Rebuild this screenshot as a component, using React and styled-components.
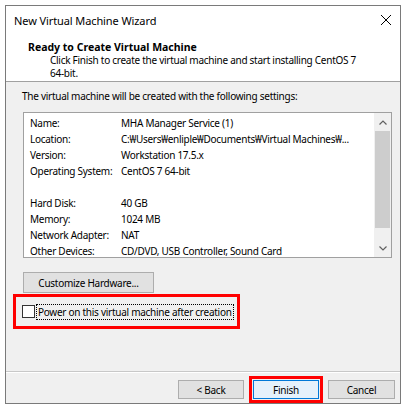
import React from "react";
import styled, { createGlobalStyle } from "styled-components";

const GlobalStyle = createGlobalStyle`
  html, body {
    margin: 0;
    padding: 0;
    background: #ffffff;
  }
  body {
    font-family: "Noto Sans", "Liberation Sans", sans-serif;
    font-size: 10px;
    letter-spacing: -0.27px;
    color: #000000;
  }
`;

// Wizard window frame
const Window = styled.div`
  box-sizing: border-box;
  width: 396px;
  height: 399px;
  margin: 5px 0 0 5px;
  border: 1px solid #7a7a7a;
  display: flex;
  flex-direction: column;
  background: #ffffff;
`;

const TitleBar = styled.div`
  height: 28px;
  display: flex;
  align-items: center;
  justify-content: space-between;
  padding: 0 8px 0 8px;
  font-size: 11px;
  letter-spacing: -0.1px;
  color: #000;
`;

const CloseIcon = styled.svg`
  width: 12px;
  height: 12px;
`;

// White header with page title
const Header = styled.div`
  padding: 6px 0 1px 22px;
  border-bottom: 1px solid #a0a0a0;
`;

const HeaderTitle = styled.div`
  font-weight: bold;
  line-height: 14px;
  font-size: 10.5px;
  letter-spacing: 0;
`;

const HeaderText = styled.div`
  padding-left: 22px;
  padding-right: 30px;
  line-height: 13px;
`;

// Grey content area
const Body = styled.div`
  flex: 1;
  background: #f0f0f0;
  padding: 7px 7px 0 17px;
  display: flex;
  flex-direction: column;
  align-items: flex-start;
`;

const Intro = styled.div`
  line-height: 14px;
  margin-left: -1px;
`;

const ListBox = styled.div`
  box-sizing: border-box;
  margin-top: 9px;
  width: 369px;
  height: 146px;
  border: 1px solid #a0a0a0;
  background: #ffffff;
  display: flex;
`;

const Rows = styled.div`
  flex: 1;
  padding: 2px 0 0 6px;
`;

const Row = styled.div`
  display: flex;
  height: 16px;
  align-items: center;
  white-space: nowrap;
`;

const Label = styled.span`
  width: 91px;
  flex: none;
`;

const Value = styled.span``;

const ScrollBar = styled.div`
  width: 17px;
  background: #f0f0f0;
  display: flex;
  flex-direction: column;
  align-items: center;
`;

const ScrollArrow = styled.div`
  height: 18px;
  display: flex;
  align-items: center;
  justify-content: center;
`;

const Thumb = styled.div`
  width: 15px;
  height: 97px;
  background: #cdcdcd;
`;

const Spacer = styled.div`
  flex: 1;
`;

const Button = styled.button`
  box-sizing: border-box;
  font-family: inherit;
  font-size: 10px;
  letter-spacing: -0.27px;
  color: #000;
  padding: 0;
  height: ${({ tall }) => (tall ? "21px" : "19px")};
  width: ${({ w }) => w || 66}px;
  background: ${({ primary }) => (primary ? "#e5f1fb" : "#e1e1e1")};
  border: 1px solid ${({ primary }) => (primary ? "#0078d7" : "#adadad")};
  outline: ${({ marked }) => (marked ? "3px solid #ff0000" : "none")};
  outline-offset: 1px;
`;

const CustomizeButton = styled(Button)`
  margin-top: 14px;
`;

// Red annotation frame around the checkbox row
const Highlight = styled.div`
  box-sizing: border-box;
  width: 227px;
  height: 35px;
  margin-left: -10px;
  margin-top: 1px;
  border: 3px solid #ff0000;
  display: flex;
  align-items: center;
  padding-left: 6px;
  gap: 1px;
`;

const CheckBox = styled.span`
  box-sizing: border-box;
  width: 13px;
  height: 13px;
  border: 1px solid #333333;
  background: #ffffff;
  flex: none;
`;

const CheckLabel = styled.span`
  border: 1px dotted #000;
  line-height: 14px;
  padding: 0 1px;
  white-space: nowrap;
`;

const Footer = styled.div`
  border-top: 1px solid #c8c8c8;
  box-shadow: inset 0 1px 0 #ffffff;
  background: #f0f0f0;
  height: 32px;
  box-sizing: border-box;
  padding: 8px 5px 0 0;
  display: flex;
  justify-content: flex-end;
  align-items: flex-start;
  gap: 9px;
`;

const settings = [
  ["Name:", "MHA Manager Service (1)"],
  ["Location:", "C:\u20a9Users\u20a9enliple\u20a9Documents\u20a9Virtual Machines\u20a9..."],
  ["Version:", "Workstation 17.5.x"],
  ["Operating System:", "CentOS 7 64-bit"],
  ["", ""],
  ["Hard Disk:", "40 GB"],
  ["Memory:", "1024 MB"],
  ["Network Adapter:", "NAT"],
  ["Other Devices:", "CD/DVD, USB Controller, Sound Card"],
];

const Chevron = ({ up }) => (
  <svg width="8" height="5" viewBox="0 0 8 5">
    <path
      d={up ? "M0.5 4.5 L4 1 L7.5 4.5" : "M0.5 0.5 L4 4 L7.5 0.5"}
      fill="none"
      stroke="#606060"
      strokeWidth="1.2"
    />
  </svg>
);

export default function App() {
  return (
    <>
      <GlobalStyle />
      <Window>
        <TitleBar>
          <span>New Virtual Machine Wizard</span>
          <CloseIcon viewBox="0 0 12 12">
            <path d="M1 1 L11 11 M11 1 L1 11" stroke="#000" strokeWidth="1" />
          </CloseIcon>
        </TitleBar>
        <Header>
          <HeaderTitle>Ready to Create Virtual Machine</HeaderTitle>
          <HeaderText>
            Click Finish to create the virtual machine and start installing CentOS 7 64-bit.
          </HeaderText>
        </Header>
        <Body>
          <Intro>The virtual machine will be created with the following settings:</Intro>
          <ListBox>
            <Rows>
              {settings.map(([label, value], i) => (
                <Row key={i}>
                  <Label>{label}</Label>
                  <Value>{value}</Value>
                </Row>
              ))}
            </Rows>
            <ScrollBar>
              <ScrollArrow>
                <Chevron up />
              </ScrollArrow>
              <Thumb />
              <Spacer />
              <ScrollArrow>
                <Chevron />
              </ScrollArrow>
            </ScrollBar>
          </ListBox>
          <CustomizeButton tall w={131}>
            Customize Hardware...
          </CustomizeButton>
          <Highlight>
            <CheckBox />
            <CheckLabel>Power on this virtual machine after creation</CheckLabel>
          </Highlight>
        </Body>
        <Footer>
          <Button>&lt; Back</Button>
          <Button primary marked>
            Finish
          </Button>
          <Button w={67}>Cancel</Button>
        </Footer>
      </Window>
    </>
  );
}
